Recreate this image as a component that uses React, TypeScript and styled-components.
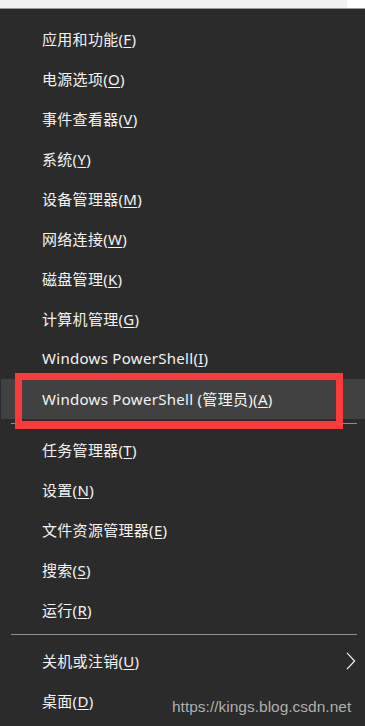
import React from "react";
import styled, { createGlobalStyle } from "styled-components";

const Global = createGlobalStyle`
  html, body { margin: 0; padding: 0; background: #2b2b2b; }
  body { width: 365px; height: 726px; overflow: hidden; }
`;

const Page = styled.div`
  position: relative;
  width: 365px;
  height: 726px;
  background: #2b2b2b;
  overflow: hidden;
  font-family: "Noto Sans", "Noto Sans CJK SC", sans-serif;
`;

const TopStrip = styled.div`
  display: flex;
  height: 8px;
  border-bottom: 1px solid #9a9a9a;
`;

const TopLight = styled.div`
  width: 347px;
  background: #f2f2f3;
`;

const TopWhite = styled.div`
  flex: 1;
  background: #ffffff;
`;

const Menu = styled.div`
  display: flex;
  flex-direction: column;
  padding-top: 10px;
`;

const Row = styled.div<{ $active?: boolean }>`
  display: flex;
  align-items: center;
  justify-content: space-between;
  height: 40px;
  padding: 0 9px 2px 41px;
  box-sizing: border-box;
  margin-left: 1px;
  background: ${(p) => (p.$active ? "#414141" : "transparent")};
  color: #f3f3f3;
  font-size: 15px;
  letter-spacing: 0.3px;
  white-space: nowrap;
`;

const Label = styled.span``;

const Key = styled.span`
  text-decoration: underline;
  text-underline-offset: 2px;
  text-decoration-thickness: 1px;
`;

const Separator = styled.div`
  height: 1px;
  margin: 4px 8px 6px 11px;
  background: #8f8f8f;
`;

const Chevron = styled.svg`
  width: 10px;
  height: 18px;
  display: block;
  margin-top: 2px;
`;

const Watermark = styled.div`
  position: absolute;
  left: 172px;
  top: 698px;
  font-family: "Liberation Sans", Arial, sans-serif;
  font-size: 15.5px;
  color: rgba(215, 215, 215, 0.78);
`;

const Annotation = styled.div`
  position: absolute;
  left: 15px;
  top: 373px;
  width: 328px;
  height: 56px;
  box-sizing: border-box;
  border-style: solid;
  border-color: #fb3a3a;
  border-width: 7px 7px 8px 7px;
`;

type Item =
  | { kind: "item"; text: string; key: string; active?: boolean; sub?: boolean }
  | { kind: "sep" };

const items: Item[] = [
  { kind: "item", text: "应用和功能", key: "F" },
  { kind: "item", text: "电源选项", key: "O" },
  { kind: "item", text: "事件查看器", key: "V" },
  { kind: "item", text: "系统", key: "Y" },
  { kind: "item", text: "设备管理器", key: "M" },
  { kind: "item", text: "网络连接", key: "W" },
  { kind: "item", text: "磁盘管理", key: "K" },
  { kind: "item", text: "计算机管理", key: "G" },
  { kind: "item", text: "Windows PowerShell", key: "I" },
  { kind: "item", text: "Windows PowerShell (管理员)", key: "A", active: true },
  { kind: "sep" },
  { kind: "item", text: "任务管理器", key: "T" },
  { kind: "item", text: "设置", key: "N" },
  { kind: "item", text: "文件资源管理器", key: "E" },
  { kind: "item", text: "搜索", key: "S" },
  { kind: "item", text: "运行", key: "R" },
  { kind: "sep" },
  { kind: "item", text: "关机或注销", key: "U", sub: true },
  { kind: "item", text: "桌面", key: "D" },
];

export default function App() {
  return (
    <>
      <Global />
      <Page>
        <TopStrip>
          <TopLight />
          <TopWhite />
        </TopStrip>
        <Menu>
          {items.map((it, i) =>
            it.kind === "sep" ? (
              <Separator key={i} />
            ) : (
              <Row key={i} $active={it.active}>
                <Label>
                  {it.text}(<Key>{it.key}</Key>)
                </Label>
                {it.sub && (
                  <Chevron viewBox="0 0 10 18">
                    <path d="M1 0.8 L8.6 9 L1 17.2" fill="none" stroke="#f3f3f3" strokeWidth="1.2" />
                  </Chevron>
                )}
              </Row>
            )
          )}
        </Menu>
        <Annotation />
        <Watermark>https://kings.blog.csdn.net</Watermark>
      </Page>
    </>
  );
}
